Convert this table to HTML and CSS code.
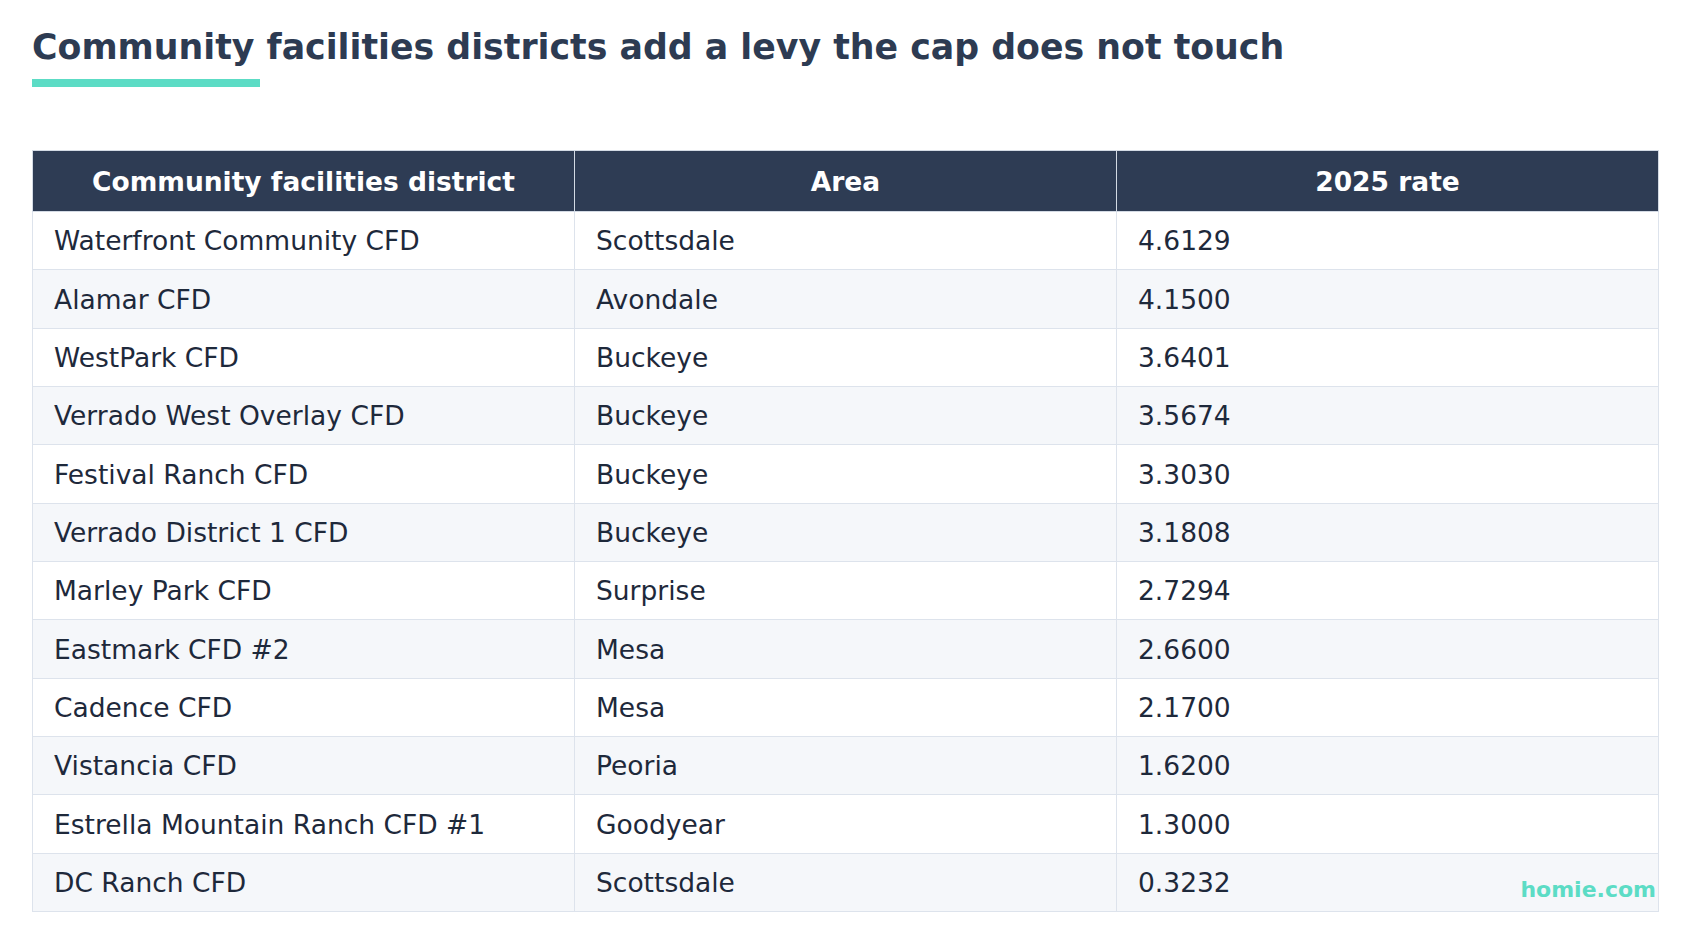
FILE: index.html
```html
<!DOCTYPE html>
<html lang="en">
<head>
<meta charset="utf-8">
<title>Community facilities districts</title>
<link rel="stylesheet" href="styles.css">
</head>
<body>
<main class="page">
  <h1 class="title">Community facilities districts add a levy the cap does not touch</h1>
  <div class="accent"></div>
  <div class="table-wrap">
    <table class="data">
      <thead>
        <tr><th>Community facilities district</th><th>Area</th><th>2025 rate</th></tr>
      </thead>
      <tbody>
        <tr><td>Waterfront Community CFD</td><td>Scottsdale</td><td>4.6129</td></tr>
        <tr><td>Alamar CFD</td><td>Avondale</td><td>4.1500</td></tr>
        <tr><td>WestPark CFD</td><td>Buckeye</td><td>3.6401</td></tr>
        <tr><td>Verrado West Overlay CFD</td><td>Buckeye</td><td>3.5674</td></tr>
        <tr><td>Festival Ranch CFD</td><td>Buckeye</td><td>3.3030</td></tr>
        <tr><td>Verrado District 1 CFD</td><td>Buckeye</td><td>3.1808</td></tr>
        <tr><td>Marley Park CFD</td><td>Surprise</td><td>2.7294</td></tr>
        <tr><td>Eastmark CFD #2</td><td>Mesa</td><td>2.6600</td></tr>
        <tr><td>Cadence CFD</td><td>Mesa</td><td>2.1700</td></tr>
        <tr><td>Vistancia CFD</td><td>Peoria</td><td>1.6200</td></tr>
        <tr><td>Estrella Mountain Ranch CFD #1</td><td>Goodyear</td><td>1.3000</td></tr>
        <tr><td>DC Ranch CFD</td><td>Scottsdale</td><td>0.3232</td></tr>
      </tbody>
    </table>
    <div class="watermark">homie.com</div>
  </div>
</main>
</body>
</html>
```

FILE: styles.css
```css
html, body {
  margin: 0;
  padding: 0;
  background: #ffffff;
}

body {
  font-family: "DejaVu Sans", "Liberation Sans", sans-serif;
}

.page {
  padding: 27px 32px 0 32px;
}

.title {
  margin: 0;
  font-size: 34.75px;
  font-weight: bold;
  line-height: normal;
  color: #2d3b52;
}

.accent {
  width: 228px;
  height: 8px;
  margin-top: 12px;
  background: #5cdcc5;
}

.table-wrap {
  position: relative;
  margin-top: 63px;
  width: 1627px;
}

.data {
  width: 100%;
  border-collapse: collapse;
  table-layout: fixed;
  border: 1px solid #dde3ec;
}

.data th {
  height: 60px;
  padding: 0 12px;
  background: #2e3c54;
  color: #ffffff;
  font-size: 26.5px;
  font-weight: bold;
  text-align: center;
  border: 1px solid #d3dae4;
}

.data td {
  height: 57.35px;
  padding: 0 21px;
  font-size: 26.5px;
  color: #1e293b;
  border: 1px solid #dde3ec;
  white-space: nowrap;
}

.data tbody tr:nth-child(even) td {
  background: #f5f7fa;
}

.watermark {
  position: absolute;
  right: 3px;
  bottom: 10px;
  font-size: 22px;
  font-weight: bold;
  color: #5cdcc5;
}
```
